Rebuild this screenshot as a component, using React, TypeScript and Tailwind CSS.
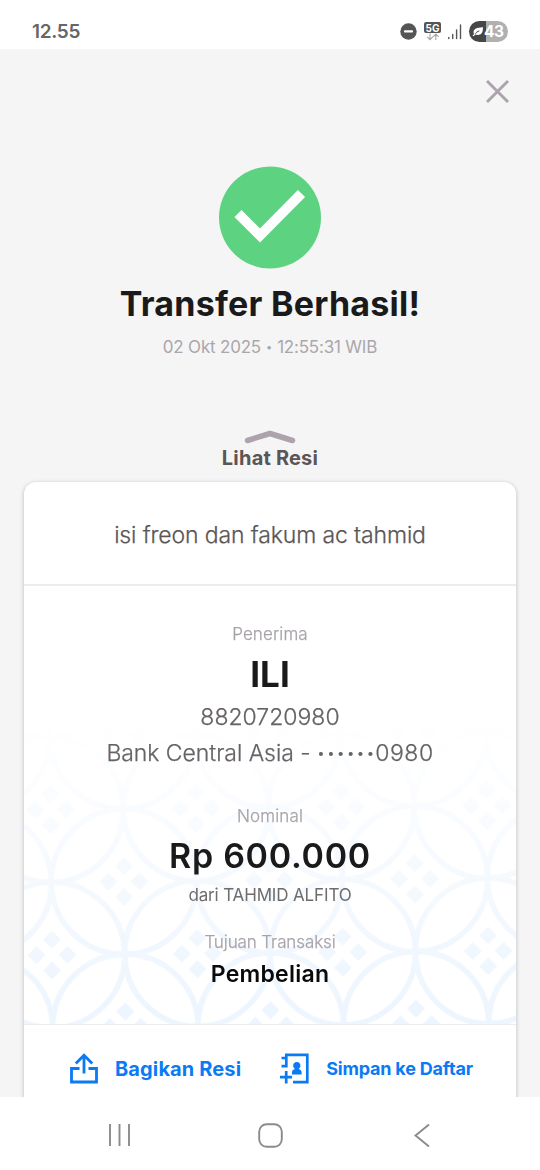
const patternCells = [-2, -1, 0, 1, 2, 3, 4, 5, 6, 7, 8]

const StatusIcons = () => (
  <div className="flex items-center">
    <svg width="17" height="17" viewBox="0 0 17 17">
      <circle cx="8.5" cy="8.5" r="8.2" fill="#555456" />
      <rect x="4" y="7.2" width="9" height="2.4" rx="0.8" fill="#fff" />
    </svg>
    <div className="ml-[7px] flex w-[17px] flex-col items-center">
      <div className="flex h-[11px] w-[17px] items-center justify-center rounded-[2px] bg-[#555456] text-[10px] leading-none font-bold text-white">
        5G
      </div>
      <svg width="14" height="8" viewBox="0 0 14 8" fill="none" stroke="#a5a5a5" strokeWidth="1.1">
        <path d="M4 0.5v6M1.2 3.8 4 6.6l2.8-2.8M9.8 7v-6M7 3.8 9.8 1l2.8 2.8" />
      </svg>
    </div>
    <svg className="ml-[6px]" width="15" height="17" viewBox="0 0 15 17" fill="none" stroke="#555456" strokeWidth="1.4" strokeLinecap="round">
      <path d="M1.8 14.5v1M5.7 11.5v4M9.600 7v8.500M13.500 2v13.500" />
    </svg>
    <div className="ml-[7px] flex h-[21px] w-[39px] items-center overflow-hidden rounded-full bg-[linear-gradient(90deg,#464547_43%,#b0b0b0_43%)]">
      <svg className="ml-[3px]" width="11" height="11" viewBox="0 0 11 11">
        <path d="M.5 9.600 2 8.200C1 6 1.500 4 3.500 2.700 5.500 1.500 8 1.800 10.800 1c.3 3.500-.2 5.800-2.200 7.200-1.600 1-3.800.9-5.200.4L1.500 10.300z" fill="#fff" />
        <path d="M3 7.800C4.300 6.300 5.500 5.500 7.300 4.900" stroke="#464547" strokeWidth="1" fill="none" />
      </svg>
      <span className="ml-[1px] text-[15.5px] leading-none font-bold tracking-[-0.5px] text-white">43</span>
    </div>
  </div>
)

// Kawung motif behind the receipt, fading out towards the top
const BatikPattern = () => (
  <svg className="absolute inset-x-0 bottom-0" width="492" height="438" viewBox="24 586 492 438">
    <defs>
      <linearGradient id="fade" gradientUnits="userSpaceOnUse" x1="0" y1="715" x2="0" y2="1010">
        <stop offset="0" stopColor="#fff" stopOpacity="0" />
        <stop offset="1" stopColor="#fff" />
      </linearGradient>
      <mask id="fadeMask" maskUnits="userSpaceOnUse" x="0" y="500" width="560" height="600">
        <rect x="0" y="500" width="560" height="600" fill="url(#fade)" />
      </mask>
    </defs>
    <g mask="url(#fadeMask)">
      <g transform="rotate(-0.55 52 955)">
        {patternCells.map((row) =>
          patternCells
            .filter((col) => (row + col) % 2 === 0)
            .map((col) => {
              const x = 52 + col * 72.7
              const y = 955 + (row - 4) * 72.7
              return (
                <g key={`${row}-${col}`}>
                  <circle cx={x} cy={y} r="72.7" fill="none" stroke="#edf5fe" strokeWidth="5.5" />
                  <path
                    d="M0-23.500l8 8L0-7.500l-8-8zM0 7.500l8 8L0 23.500l-8-8zM-15.500-8-7.500 0l-8 8L-23.500 0zM15.500-8 23.500 0l-8 8L7.500 0z"
                    transform={`translate(${x} ${y})`}
                    fill="#edf5fe"
                    stroke="#edf5fe"
                    strokeWidth="1.5"
                    strokeLinejoin="round"
                  />
                </g>
              )
            })
        )}
      </g>
    </g>
  </svg>
)

const App = () => {
  return (
    <div className="flex h-[1170px] w-[540px] flex-col overflow-hidden bg-white font-['Inter','Liberation_Sans',sans-serif]">
      <header className="flex h-[49px] shrink-0 items-center justify-between pt-[14px] pr-8 pl-8">
        <span className="text-[19px] leading-none font-semibold tracking-[-0.3px] text-[#666]">12.55</span>
        <StatusIcons />
      </header>

      <main className="flex h-[1048px] shrink-0 flex-col items-center overflow-hidden bg-[#f5f5f5]">
        <button className="mt-[31px] mr-[31px] self-end">
          <svg width="23" height="23" viewBox="0 0 23 23" fill="none" stroke="#aca3ad" strokeWidth="2.9">
            <path d="M1 1l21 21M22 1 1 22" />
          </svg>
        </button>

        <svg className="mt-[63px] shrink-0" width="102" height="103" viewBox="0 0 102 103">
          <circle cx="51" cy="51.5" r="51" fill="#5dd382" />
          <path d="M19 47.5 41 69.5 82.5 27.5" fill="none" stroke="#fff" strokeWidth="10" />
        </svg>

        <h1 className="mt-[15px] text-[34px] leading-[40px] font-bold tracking-[0.25px] whitespace-nowrap text-[#1a1a1a]">Transfer Berhasil!</h1>
        <p className="mt-[13px] text-[17px] leading-5 tracking-[-0.2px] whitespace-nowrap text-[#aba6ab]">
          02 Okt 2025 <span className="inline-block w-[7px] -translate-y-px text-center align-middle text-[11px] leading-none">•</span> 12:55:31 WIB
        </p>

        <svg className="mt-[72px] shrink-0" width="52" height="16" viewBox="0 0 52 16" fill="none" stroke="#aca3ad" strokeWidth="5.5" strokeLinecap="round">
          <path d="M3.5 11.5 26 4.500 48.500 11.500" strokeLinejoin="round" />
        </svg>
        <p className="mt-[3px] text-[20px] leading-5 font-bold tracking-[0.2px] whitespace-nowrap text-[#5a5556]">Lihat Resi</p>

        <section className="mt-[14px] flex h-[640px] w-[492px] shrink-0 flex-col rounded-t-[12px] bg-white text-center whitespace-nowrap shadow-[0_1px_4px_rgba(0,0,0,0.25)]">
          <p className="h-[104px] border-b-2 border-[#ededed] pt-[38px] text-[23px] leading-[30px] font-light tracking-[-0.12px] text-[#5a5556] [-webkit-text-stroke:0.25px]">
            isi freon dan fakum ac tahmid
          </p>

          <div className="relative h-[439px] border-b border-[#ececee]">
            <BatikPattern />
            <div className="relative flex flex-col items-center pt-[38px]">
              <p className="text-[17px] leading-5 font-light tracking-[0.1px] text-[#a8a3a9] [-webkit-text-stroke:0.25px]">Penerima</p>
              <p className="mt-[10px] text-[35px] leading-[40px] font-bold text-[#1a1a1a]">ILI</p>
              <p className="mt-[8px] text-[23px] leading-[30px] font-light text-[#666265] [-webkit-text-stroke:0.25px]">8820720980</p>
              <p className="mt-[6px] flex items-center text-[23px] leading-[30px] font-light tracking-[-0.05px] whitespace-pre text-[#666265] [-webkit-text-stroke:0.25px]">
                Bank Central Asia -{' '}
                <span className="mr-[-1px] text-[14px] tracking-[2px]">••••••</span>
                <span className="tracking-[0.5px]">0980</span>
              </p>
              <p className="mt-[38px] text-[17px] leading-5 font-light tracking-[0.15px] text-[#a8a3a9] [-webkit-text-stroke:0.25px]">Nominal</p>
              <p className="mt-[10px] text-[34px] leading-[40px] font-semibold tracking-[0.7px] text-[#1a1a1a]">Rp 600.000</p>
              <p className="mt-[9px] text-[17px] leading-5 tracking-[-0.15px] text-[#6f6c6e]">dari TAHMID ALFITO</p>
              <p className="mt-[27px] text-[17px] leading-5 font-light tracking-[-0.1px] text-[#a8a3a9] [-webkit-text-stroke:0.25px]">Tujuan Transaksi</p>
              <p className="mt-[9px] text-[23px] leading-[26px] font-semibold tracking-[0.25px] text-[#0a0a0a]">Pembelian</p>
            </div>
          </div>

          <div className="flex h-[87px] items-center text-[#0a7af5]">
            <button className="ml-[46px] flex items-center">
              <svg width="28" height="31" viewBox="0 0 28 31" fill="none" stroke="currentColor" strokeWidth="2.8">
                <path d="M9.5 15.5h-8v13.500h25v-13.500h-8M14 20.500V3M5.800 10.500 14 2.200l8.200 8.300" />
              </svg>
              <span className="ml-[17px] text-[20px] leading-6 font-bold tracking-[0.12px]">Bagikan Resi</span>
            </button>
            <button className="ml-[39px] flex items-center">
              <svg width="29" height="31" viewBox="0 0 29 31" fill="none" stroke="currentColor" strokeWidth="2.7">
                <path d="M6.3 14.500V1.800h21v27.400H13M1.500 5h5M1.500 13.200h6M6.200 18v12.500M0 24.200h12" />
                <path d="M12 21.500v-2.200c0-1.900 1.500-3.100 3-3.400a3.700 3.700 0 1 1 3.600 0c1.500.3 3 1.500 3 3.400v2.200z" fill="currentColor" stroke="none" />
              </svg>
              <span className="ml-[17px] text-[18px] leading-6 font-bold tracking-[-0.2px]">Simpan ke Daftar</span>
            </button>
          </div>
        </section>
      </main>

      <nav className="flex h-[73px] items-center bg-white pt-[3px]">
        <svg className="ml-[108px]" width="23" height="24" viewBox="0 0 23 24" stroke="#8b8b8b" strokeWidth="1.9">
          <path d="M2 1v22M11.5 1v22M21 1v22" />
        </svg>
        <svg className="ml-[127px]" width="25" height="25" viewBox="0 0 25 25" fill="none" stroke="#8b8b8b" strokeWidth="1.9">
          <rect x="1.2" y="1.2" width="22.6" height="22.6" rx="7.5" />
        </svg>
        <svg className="ml-[131px]" width="16" height="25" viewBox="0 0 16 25" fill="none" stroke="#8b8b8b" strokeWidth="1.9">
          <path d="M15 1.5 1.5 12.5 15 23.5" />
        </svg>
      </nav>
    </div>
  )
}

export default App
